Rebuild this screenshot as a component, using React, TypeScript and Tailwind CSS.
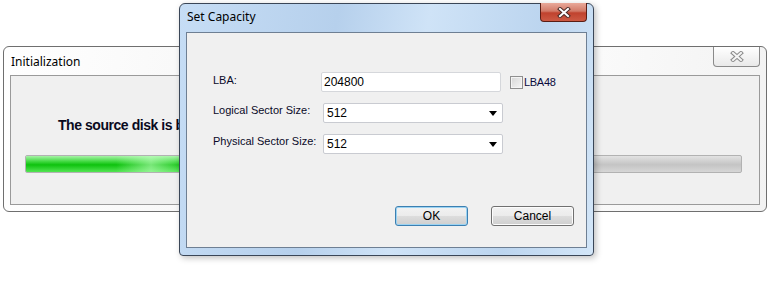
import React from 'react';

function CloseGlyph({ stroke, outline }: { stroke: string; outline: string }) {
  return (
    <svg width="14" height="11" viewBox="0 0 14 11" aria-hidden>
      <path d="M3 2 L11 9 M11 2 L3 9" stroke={outline} strokeWidth="4" strokeLinecap="square" fill="none" />
      <path d="M3 2 L11 9 M11 2 L3 9" stroke={stroke} strokeWidth="2" strokeLinecap="square" fill="none" />
    </svg>
  );
}

function SelectBox({ value }: { value: string }) {
  return (
    <div className="w-[180px] h-[20px] bg-white border border-[#c9cbd1] rounded-[2px] flex items-center justify-between pl-[3px] pr-[5px]">
      <span className="text-[12px] text-black leading-none">{value}</span>
      <svg width="8" height="5" viewBox="0 0 8 5" aria-hidden>
        <path d="M0 0 H8 L4 5 Z" fill="#000" />
      </svg>
    </div>
  );
}

function WinButton({ label, primary }: { label: string; primary?: boolean }) {
  return (
    <button
      className={`h-[20px] rounded-[3px] border text-[12px] text-black leading-none flex items-center justify-center bg-[linear-gradient(#f2f2f2_0%,#ebebeb_50%,#dddddd_50%,#cfcfcf_100%)] ${
        primary ? 'w-[73px] border-[#3c7fb1] shadow-[inset_0_0_0_1px_#9bd3f2]' : 'w-[83px] border-[#707070] shadow-[inset_0_0_0_1px_#fcfcfc]'
      }`}
    >
      {label}
    </button>
  );
}

export default function App() {
  return (
    <div className="relative w-[778px] h-[282px] bg-white overflow-hidden font-['Liberation_Sans',Arial,sans-serif]">
      {/* background window */}
      <div className="absolute left-[3px] top-[46px] w-[764px] h-[166px] rounded-[6px] border border-[#6f6f6f] bg-[linear-gradient(100deg,#ffffff_0%,#f4f4f4_40%,#ffffff_60%,#f2f2f2_100%)] px-[6px] pb-[6px] flex flex-col">
        <div className="h-[28px] flex items-center justify-between">
          <span className="pl-[1px] pt-[1px] text-[12px] text-black font-['Noto_Sans',sans-serif]">Initialization</span>
          <div className="self-start w-[47px] h-[20px] rounded-b-[4px] border border-t-0 border-[#8a8a8a] bg-[linear-gradient(#ffffff,#e9e9e9)] flex items-center justify-center">
            <CloseGlyph stroke="#f5f5f5" outline="#8b8b8b" />
          </div>
        </div>
        <div className="flex-1 border border-[#9a9a9a] bg-[#f0f0f0] flex flex-col pl-[14px] pr-[17px]">
          <p className="mt-[39px] ml-[33px] text-[14px] font-bold text-[#0a0a1e] tracking-[-0.45px]">
            The source disk is being initialized, please wait...
          </p>
          <div className="mt-[19px] h-[18px] rounded-[2px] border border-[#b2b2b2] bg-[linear-gradient(#e2e2e2,#c9c9c9_45%,#c4c4c4_55%,#d6d6d6)] overflow-hidden flex">
            <div className="w-[45%] h-full bg-[linear-gradient(#a6f3a6,#3fd83f_35%,#0ec20e_55%,#53e553)] relative">
              <div className="absolute inset-y-0 left-[90px] w-[70px] bg-[linear-gradient(90deg,transparent,rgba(190,255,190,0.6),transparent)]" />
            </div>
          </div>
        </div>
      </div>

      {/* foreground dialog */}
      <div className="absolute left-[179px] top-[3px] w-[415px] h-[253px] rounded-t-[6px] rounded-b-[4px] border border-[#3a4657] bg-[linear-gradient(100deg,#c6ddf5_0%,#b6d0ec_35%,#cfe3f7_55%,#bcd5ef_80%,#d3e6f8_100%)] px-[6px] pb-[7px] flex flex-col shadow-[2px_2px_6px_rgba(0,0,0,0.25)]">
        <div className="h-[28px] flex items-start justify-between">
          <span className="pl-[1px] pt-[7px] text-[12px] text-black font-['Noto_Sans',sans-serif] leading-none">Set Capacity</span>
          <div className="w-[47px] h-[19px] -mt-[1px] rounded-b-[4px] border border-t-0 border-[#5a1d14] bg-[linear-gradient(#e9a99a_0%,#d27a68_45%,#c0422e_55%,#cc5a44_100%)] flex items-center justify-center">
            <CloseGlyph stroke="#ffffff" outline="#4a2a26" />
          </div>
        </div>
        <div className="flex-1 border border-[#6e7f93] bg-[#f0f0f0] pt-[39px] pl-[26px] flex flex-col">
          <div className="flex items-start h-[20px]">
            <span className="w-[108px] pt-[3px] shrink-0 whitespace-nowrap text-[11px] leading-none text-[#0a0a28]">LBA:</span>
            <div className="w-[180px] h-[20px] bg-white border border-[#d5d7db] rounded-[2px] flex items-center pl-[2px]">
              <span className="text-[12px] text-black leading-none">204800</span>
            </div>
            <div className="ml-[9px] mt-[4px] w-[13px] h-[13px] border border-[#8f8f8f] bg-[linear-gradient(135deg,#d6d6d6,#f6f6f6)] shadow-[inset_0_0_0_1px_#f4f4f4]" />
            <span className="ml-[1px] mt-[5px] whitespace-nowrap text-[11px] leading-none text-[#0a0a3c] tracking-[-0.3px]">LBA48</span>
          </div>
          <div className="flex items-start h-[20px] mt-[11px]">
            <span className="w-[110px] pt-[2px] shrink-0 whitespace-nowrap text-[11px] leading-none text-[#0a0a28]">Logical Sector Size:</span>
            <SelectBox value="512" />
          </div>
          <div className="flex items-start h-[20px] mt-[11px]">
            <span className="w-[110px] pt-[2px] shrink-0 whitespace-nowrap text-[11px] leading-none text-[#0a0a28]">Physical Sector Size:</span>
            <SelectBox value="512" />
          </div>
          <div className="flex gap-[23px] mt-[52px] ml-[182px]">
            <WinButton label="OK" primary />
            <WinButton label="Cancel" />
          </div>
        </div>
      </div>
    </div>
  );
}
